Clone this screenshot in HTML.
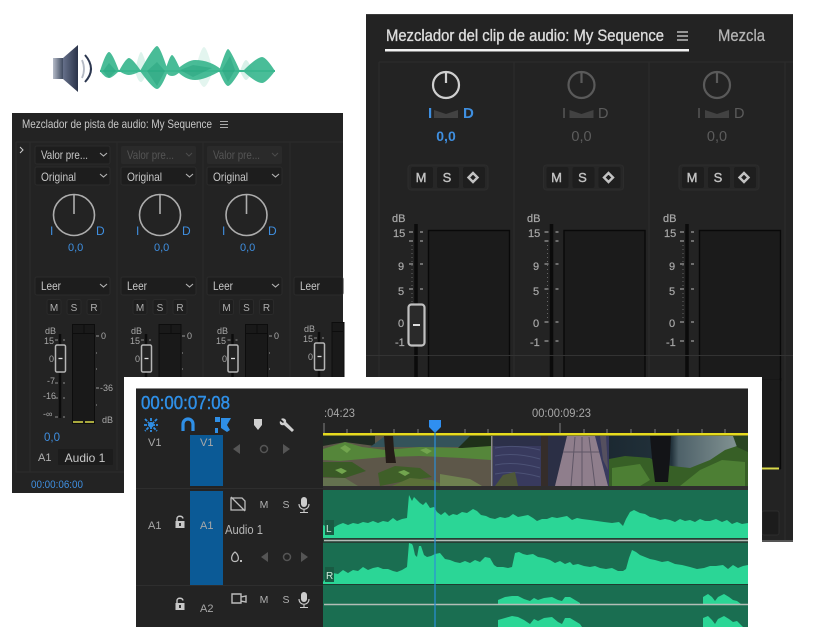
<!DOCTYPE html>
<html><head><meta charset="utf-8"><style>
html,body{margin:0;padding:0;background:#fff;width:821px;height:629px;overflow:hidden}
svg{display:block;filter:blur(.35px)}
text{font-family:"Liberation Sans",sans-serif}
</style></head><body>
<svg width="821" height="629" viewBox="0 0 821 629" xmlns="http://www.w3.org/2000/svg">
<defs>
<linearGradient id="cone" x1="0" x2="1" y1="0" y2="0"><stop offset="0" stop-color="#66708a"/><stop offset="1" stop-color="#2a3349"/></linearGradient>
<linearGradient id="box" x1="0" x2="1" y1="0" y2="0"><stop offset="0" stop-color="#b5bbc8"/><stop offset="1" stop-color="#3f4a60"/></linearGradient>
<linearGradient id="sky" x1="0" x2="1" y1="0" y2="0"><stop offset="0" stop-color="#1c2932"/><stop offset=".45" stop-color="#22323b"/><stop offset=".5" stop-color="#4e6169"/><stop offset=".9" stop-color="#7f9090"/><stop offset="1" stop-color="#6a7c78"/></linearGradient>
<clipPath id="vid"><rect x="323" y="436" width="425" height="50"/></clipPath>
<g id="dd"><rect x="0" y="0" width="75" height="18" rx="2" fill="#1d1d1d" stroke="#2b2b2b"/><path d="M65 7l3.500 3 3.500-3" fill="none" stroke="#b5b5b5" stroke-width="1.100"/></g>
<g id="knob1"><circle cx="0" cy="0" r="20.500" fill="none" stroke="#adadad" stroke-width="1.600"/><path d="M0-20V-1" stroke="#adadad" stroke-width="1.600"/></g>
<g id="fader1">
<path d="M60 334V418" stroke="#0c0c0c" stroke-width="2.500"/>
<path d="M55 340h3M63 340h2M55 383h3M63 383h2M55 398h3M63 398h2M55 417h3M63 417h2" stroke="#8c8c8c"/>
<rect x="55.500" y="345" width="10" height="27" rx="1.500" fill="#232323" stroke="#b5b5b5" stroke-width="1.500"/>
<path d="M58.500 358.500h4" stroke="#ddd" stroke-width="1.300"/>
</g>
<g id="msr"><rect x="47" y="299.500" width="14" height="15" rx="2" fill="#1e1e1e" stroke="#2a2a2a"/><rect x="67" y="299.500" width="14" height="15" rx="2" fill="#1e1e1e" stroke="#2a2a2a"/><rect x="87" y="299.500" width="14" height="15" rx="2" fill="#1e1e1e" stroke="#2a2a2a"/></g>
<g id="knob2"><circle cx="0" cy="0" r="13" fill="none" stroke-width="2.200"/><path d="M0-13V-2" fill="none" stroke-width="2.200"/></g>
<g id="ticks2">
<path d="M416 224V380" stroke="#0b0b0b" stroke-width="3.500"/>
<path d="M409 232h4M420 232h3M409 241h4M420 241h3M409 264h4M420 264h3M409 289h4M420 289h3M409 322h4M420 322h3M409 341h4M420 341h3" stroke="#9a9a9a" stroke-width="1.300"/>
<path d="M412 245V320" stroke="#666" stroke-width="1" stroke-dasharray="1 3"/>
<rect x="428.500" y="230.500" width="81" height="150" fill="#1b1b1b" stroke="#090909" stroke-width="1.400"/>
<rect x="408" y="165" width="80" height="25" rx="3" fill="#272727" stroke="#2c2c2c"/>
<rect x="411" y="167" width="22" height="21" rx="2" fill="#1e1e1e"/><rect x="437" y="167" width="22" height="21" rx="2" fill="#1e1e1e"/><rect x="463" y="167" width="22" height="21" rx="2" fill="#1e1e1e"/>
<path d="M434 110l12 4 12-4v8h-24z" fill="#424242"/>
</g>
<g id="mic"><rect x="-3" y="-8" width="6" height="10" rx="3" fill="#ccc"/><path d="M-5-1c0 7 10 7 10 0M0 4v3M-4 7.500h8" fill="none" stroke="#ccc" stroke-width="1.100"/></g>
<g id="lock"><path d="M-3-3v-2.500c0-3 5.500-3 6 0" fill="none" stroke="#c8c8c8" stroke-width="1.400"/><rect x="-4.500" y="-3" width="9" height="7" fill="#c8c8c8"/><rect x="-1" y="-1" width="2" height="3" fill="#333"/></g>
</defs>

<rect width="821" height="629" fill="#fff"/>

<!-- logo -->
<g>
<path d="M135 71Q139 52 141 52Q143 52 148 71Q143 82 141 82Q138 82 135 71Z" fill="#8fd8c0" opacity=".3"/>
<path d="M195 71Q201 47 204 47Q207 47 213 71Q207 87 204 87Q201 87 195 71Z" fill="#8fd8c0" opacity=".25"/>
<path d="M240 71Q244 60 246 60Q248 60 253 71Q248 80 246 80Q244 80 240 71Z" fill="#8fd8c0" opacity=".35"/>
<g fill="#3ab78f" opacity=".92">
<path d="M100 71Q106 52 109 52Q112 52 119 71Q112 78 109 78Q105 78 100 71Z"/>
<path d="M119 71Q126 58 129 58Q132 58 141 71Q133 75 129 75Q125 75 119 71Z"/>
<path d="M140 71Q154 46 157 46Q160 46 168 71Q161 89 157 89Q153 89 140 71Z"/>
<path d="M165 71Q170 55 172 55Q174 55 181 71Q176 76 172 76Q168 76 165 71Z"/>
<path d="M176 70Q188 60 195 60Q210 60 222 70Q205 80 195 80Q185 80 176 70Z"/>
<path d="M219 71Q226 49 228 49Q230 49 240 71Q231 86 228 86Q225 86 219 71Z"/>
<path d="M243 71Q257 57 262 57Q266 57 275 71Q266 83 262 83Q256 83 243 71Z"/>
</g>
<path d="M100 71H275" stroke="#3ab78f" stroke-width="2"/>
<g fill="#1f9e78" opacity=".4"><path d="M103 71L109 63 116 71 109 78Z"/><path d="M147 71L157 62 165 71 157 86Z"/><path d="M180 70L193 65 212 68 193 77Z"/><path d="M222 70L230 56 235 70 228 82Z"/></g>
<rect x="53" y="58" width="10" height="21" fill="url(#box)"/>
<path d="M63 58L78 45V92L63 79Z" fill="url(#cone)"/>
<path d="M82 60Q86 69 82 78" fill="none" stroke="#b5bac4" stroke-width="1.800"/>
<path d="M85 55Q97 69 85 82" fill="none" stroke="#2c3750" stroke-width="2"/>
</g>

<!-- panel 1 -->
<rect x="12" y="113" width="331" height="380" fill="#232323"/>
<text x="22" y="128" font-size="12" fill="#c8c8c8" textLength="190" lengthAdjust="spacingAndGlyphs">Mezclador de pista de audio: My Sequence</text>
<path d="M220 121.500h8M220 124.500h8M220 127.500h8" stroke="#aaa"/>
<path d="M16 142H343M16 142V472H30M30 142V472H343" fill="none" stroke="#2c2c2c"/>
<path d="M117 142V470M203 142V470M290 142V470" stroke="#2b2b2b"/>
<path d="M20 147l3 3-3 3" fill="none" stroke="#ccc"/>

<use href="#dd" x="35" y="146"/><use href="#dd" x="35" y="167"/><use href="#dd" x="35" y="277"/>
<rect x="121" y="146" width="75" height="18" rx="2" fill="#2a2a2a"/><rect x="207" y="146" width="75" height="18" rx="2" fill="#2a2a2a"/>
<path d="M186 153l3 3 3-3M272 153l3 3 3-3" fill="none" stroke="#4c4c4c"/>
<use href="#dd" x="121" y="167"/><use href="#dd" x="121" y="277"/>
<use href="#dd" x="207" y="167"/><use href="#dd" x="207" y="277"/>
<rect x="294" y="277" width="49" height="18" rx="2" fill="#1d1d1d" stroke="#2b2b2b"/>

<g font-size="12" fill="#c8c8c8">
<text x="41" y="159" textLength="47" lengthAdjust="spacingAndGlyphs">Valor pre...</text><text x="41" y="181" textLength="35" lengthAdjust="spacingAndGlyphs">Original</text><text x="41" y="290" textLength="20" lengthAdjust="spacingAndGlyphs">Leer</text>
<text x="127" y="159" fill="#555" textLength="47" lengthAdjust="spacingAndGlyphs">Valor pre...</text><text x="127" y="181" textLength="35" lengthAdjust="spacingAndGlyphs">Original</text><text x="127" y="290" textLength="20" lengthAdjust="spacingAndGlyphs">Leer</text>
<text x="213" y="159" fill="#555" textLength="47" lengthAdjust="spacingAndGlyphs">Valor pre...</text><text x="213" y="181" textLength="35" lengthAdjust="spacingAndGlyphs">Original</text><text x="213" y="290" textLength="20" lengthAdjust="spacingAndGlyphs">Leer</text>
<text x="300" y="290" textLength="20" lengthAdjust="spacingAndGlyphs">Leer</text>
</g>
<use href="#knob1" x="74" y="215"/><use href="#knob1" x="160" y="215"/><use href="#knob1" x="246.500" y="215"/>
<g font-size="12" fill="#3f8fe0">
<text x="50" y="235">I</text><text x="96" y="235">D</text><text x="68" y="251" font-size="11">0,0</text>
<text x="136" y="235">I</text><text x="182" y="235">D</text><text x="154" y="251" font-size="11">0,0</text>
<text x="222" y="235">I</text><text x="268" y="235">D</text><text x="240" y="251" font-size="11">0,0</text>
<text x="44" y="441" font-size="11.500">0,0</text>
</g>
<use href="#msr"/><use href="#msr" x="86"/><use href="#msr" x="172.500"/>
<g font-size="10" fill="#b0b0b0" text-anchor="middle">
<text x="54" y="311">M</text><text x="74" y="311">S</text><text x="94" y="311">R</text>
<text x="140" y="311">M</text><text x="160" y="311">S</text><text x="180" y="311">R</text>
<text x="226.500" y="311">M</text><text x="246.500" y="311">S</text><text x="266.500" y="311">R</text>
</g>
<use href="#fader1"/><use href="#fader1" x="86"/><use href="#fader1" x="172.500"/><use href="#fader1" x="259" y="-2"/>

<g fill="#191919" stroke="#0d0d0d">
<rect x="72.500" y="324.500" width="22" height="99"/><rect x="159" y="324.500" width="22" height="60"/><rect x="245.500" y="324.500" width="22" height="60"/><rect x="332" y="322.500" width="12" height="60"/>
</g>
<path d="M72 333.500h23M84 325v8M159 333.500h22M171 325v8M245 333.500h23M257 325v8M332 331.500h11" stroke="#0d0d0d" fill="none"/>
<path d="M73 422h10M85 422h9" stroke="#d9d94a" stroke-width="1.600"/>
<path d="M96 336h3M182 336h3M269 336h3M96 388h3M96 353h1M96 369h1M96 405h1M182 353h1M182 369h1M269 353h1M269 369h1" stroke="#999"/>
<g font-size="9" fill="#a8a8a8">
<text x="45" y="334">dB</text><text x="44" y="344">15</text><text x="49" y="362">0</text><text x="47" y="384">-7</text><text x="43" y="399">-16</text><text x="43" y="417">-∞</text>
<text x="131" y="334">dB</text><text x="130" y="344">15</text><text x="135" y="362">0</text>
<text x="217" y="334">dB</text><text x="216" y="344">15</text><text x="222" y="362">0</text>
<text x="304" y="332">dB</text><text x="303" y="342">15</text><text x="308" y="360">0</text>
<text x="101" y="339">0</text><text x="187" y="339">0</text><text x="274" y="339">0</text>
<text x="100" y="391">-36</text><text x="102" y="423">dB</text>
</g>
<rect x="58" y="449" width="55" height="16" rx="1" fill="#1c1c1c"/>
<text x="38" y="461" font-size="11" fill="#b0b0b0">A1</text>
<text x="85" y="462" font-size="12" fill="#c8c8c8" text-anchor="middle">Audio 1</text>
<text x="31" y="488" font-size="11" fill="#3f8fe0" textLength="52" lengthAdjust="spacingAndGlyphs">00:00:06:00</text>

<!-- panel 2 -->
<rect x="366" y="14" width="427" height="527" fill="#232323"/>
<rect x="366" y="14" width="427" height="1" fill="#3a3a3a"/>
<text x="386" y="41" font-size="17" fill="#dcdcdc" stroke="#dcdcdc" stroke-width=".35" textLength="278" lengthAdjust="spacingAndGlyphs">Mezclador del clip de audio: My Sequence</text>
<path d="M677 32h11M677 36h11M677 40h11" stroke="#bbb" stroke-width="1.400"/>
<rect x="385" y="49" width="304" height="2.500" fill="#f2f2f2"/>
<text x="718" y="41" font-size="17" fill="#b5b5b5" stroke="#b5b5b5" stroke-width=".25" textLength="47" lengthAdjust="spacingAndGlyphs">Mezcla</text>
<path d="M379 62H793M379 62V380M514 62V380M649 62V380M785 62V541" stroke="#2d2d2d" fill="none"/>
<use href="#ticks2"/><use href="#ticks2" x="135.500"/><use href="#ticks2" x="271"/>
<use href="#knob2" x="446" y="85" stroke="#cfcfcf"/><use href="#knob2" x="581.500" y="85" stroke="#5a5a5a"/><use href="#knob2" x="717" y="85" stroke="#5a5a5a"/>
<text x="428" y="118" font-size="15" font-weight="bold" fill="#3f8fe0">I</text><text x="463" y="118" font-size="15" font-weight="bold" fill="#3f8fe0">D</text>
<text x="446" y="141" font-size="14" font-weight="bold" fill="#3f8fe0" text-anchor="middle">0,0</text>
<g font-size="14.500" fill="#5c5c5c">
<text x="562" y="118">I</text><text x="598" y="118">D</text><text x="581.500" y="141" text-anchor="middle">0,0</text>
<text x="697" y="118">I</text><text x="734" y="118">D</text><text x="717" y="141" text-anchor="middle">0,0</text>
</g>
<g font-size="13" fill="#c2c2c2" stroke="#c2c2c2" stroke-width=".4" text-anchor="middle">
<text x="421" y="182">M</text><text x="447" y="182">S</text>
<text x="556.500" y="182">M</text><text x="582.500" y="182">S</text>
<text x="692" y="182">M</text><text x="718" y="182">S</text>
</g>
<path d="M473 173l4.500 4.500-4.500 4.500-4.500-4.500zM608.500 173l4.500 4.500-4.500 4.500-4.500-4.500zM744 173l4.500 4.500-4.500 4.500-4.500-4.500z" fill="none" stroke="#c2c2c2" stroke-width="2.400"/>
<g font-size="11" fill="#a8a8a8" stroke="#a8a8a8" stroke-width=".2">
<text x="392" y="222">dB</text><text x="393" y="237">15</text><text x="398" y="270">9</text><text x="398" y="295">5</text><text x="398" y="327">0</text><text x="395" y="346">-1</text>
<text x="527" y="222">dB</text><text x="528" y="237">15</text><text x="533" y="270">9</text><text x="533" y="295">5</text><text x="533" y="327">0</text><text x="530" y="346">-1</text>
<text x="663" y="222">dB</text><text x="664" y="237">15</text><text x="669" y="270">9</text><text x="669" y="295">5</text><text x="669" y="327">0</text><text x="666" y="346">-1</text>
</g>
<rect x="408.500" y="304.500" width="16" height="41" rx="3" fill="#2a2a2a" stroke="#c0c0c0" stroke-width="2.200"/>
<path d="M413 325h7" stroke="#ddd" stroke-width="2"/>
<path d="M366 355.500H793" stroke="#333"/>
<!-- lower-right part of panel 2 -->
<rect x="762" y="380" width="19" height="90" fill="#1b1b1b"/>
<path d="M780.500 378V469" stroke="#090909" stroke-width="1.400"/>
<path d="M762 468.500H779" stroke="#d9d94a" stroke-width="2"/>
<rect x="762" y="511" width="17" height="24" rx="2" fill="#1c1c1c" stroke="#2d2d2d"/>
<rect x="762" y="540" width="31" height="2" fill="#555"/>

<!-- timeline -->
<rect x="124" y="377" width="638" height="252" fill="#fff"/>
<rect x="136" y="388" width="612" height="239" fill="#232323"/>
<rect x="136" y="388" width="612" height="1" fill="#8a8a8a"/>
<text x="141" y="409" font-size="18.500" fill="#2f8fe6" stroke="#2f8fe6" stroke-width=".45" textLength="89" lengthAdjust="spacingAndGlyphs">00:00:07:08</text>

<!-- tool icons -->
<path d="M145 419l12 12M157 419l-12 12M151 418v14M144 425h14" stroke="#2f8fe6" stroke-width="1.800" stroke-dasharray="3 1"/>
<path d="M183 431v-7a5 5 0 0 1 10 0v7" fill="none" stroke="#2f8fe6" stroke-width="3.200"/>
<path d="M215 417h5v5h-5zM215 428h3v5h-3z" fill="#2f8fe6"/><path d="M221 418l10 0-4 7 3 5-3 2-6-4z" fill="#2f8fe6"/>
<path d="M254 419h8v6l-4 5-4-5z" fill="#cfcfcf"/>
<path d="M281 419c3-2 6 1 5 3l8 8-2 2-8-7c-3 1-5-1-4-4l3 2 1-1z" fill="#cfcfcf"/>

<!-- ruler -->
<text x="324" y="417" font-size="12" fill="#a6a6a6" textLength="31" lengthAdjust="spacingAndGlyphs">:04:23</text>
<text x="532" y="417" font-size="12" fill="#a6a6a6" textLength="59" lengthAdjust="spacingAndGlyphs">00:00:09:23</text>
<path d="M324 423v10M347 429v4M371 429v4M394 429v4M418 429v4M465 429v4M465 429v4M488 429v4M512 429v4M560 423v10M584 429v4M607 429v4M631 429v4M655 429v4M678 429v4M702 429v4M725 429v4" stroke="#808080"/>

<!-- track headers -->
<rect x="190" y="435" width="33" height="51" fill="#0b5a96"/>
<rect x="190" y="491" width="33" height="94" fill="#0b5a96"/>
<path d="M136 488.500H323M136 585.500H323" stroke="#2e2e2e"/>
<g font-size="11" fill="#a8a8a8">
<text x="148" y="446">V1</text><text x="200" y="446">V1</text>
<text x="148" y="529">A1</text><text x="200" y="529">A1</text><text x="200" y="612">A2</text>
</g>
<text x="225" y="534" font-size="12.500" fill="#b5b5b5" textLength="38" lengthAdjust="spacingAndGlyphs">Audio 1</text>
<g fill="#555"><path d="M240 444v10l-7-5zM283 444v10l7-5z"/><circle cx="264" cy="449" r="3.500" fill="none" stroke="#555" stroke-width="1.500"/>
<path d="M268 552v10l-7-5zM301 552v10l7-5z"/><circle cx="287" cy="557" r="3.500" fill="none" stroke="#555" stroke-width="1.500"/></g>
<use href="#lock" x="180" y="524"/><use href="#lock" x="180" y="606"/>
<path d="M231 498h11l3 3v9h-14zM231 497l14 14" fill="none" stroke="#bdbdbd" stroke-width="1.300"/>
<path d="M232 594h9v9h-9zM241 597l5-1v6l-5-1z" fill="none" stroke="#bdbdbd" stroke-width="1.400"/>
<path d="M235 552c3 2 4 6 3 8s-5 2-6 0 0-6 3-8z" fill="none" stroke="#bdbdbd" stroke-width="1.200"/><rect x="240" y="560" width="2" height="2" fill="#bdbdbd"/>
<g font-size="10.500" fill="#b0b0b0" text-anchor="middle">
<text x="264" y="508">M</text><text x="286" y="508">S</text>
<text x="264" y="603">M</text><text x="286" y="603">S</text>
</g>
<use href="#mic" x="304" y="505"/><use href="#mic" x="304" y="600"/>

<!-- video -->
<rect x="323" y="435" width="425" height="55" fill="#2e2e2e"/>
<g clip-path="url(#vid)">
<!-- clip 1 -->
<rect x="323" y="436" width="168" height="50" fill="#5d5749"/>
<path d="M323 436H375V446L345 442 323 446Z" fill="#1f2a22"/>
<path d="M370 447L385 436H470L462 447Z" fill="#34535a"/>
<path d="M458 448L470 436H491V450Z" fill="#1f3019"/>
<path d="M323 449L345 442 362 447 385 450 420 447 462 448 491 446V460L462 458 420 456 385 457 362 459 340 461 323 460Z" fill="#55863a"/>
<path d="M323 462H352L366 471 345 478 323 477Z" fill="#3a5a26"/>
<path d="M323 478L345 478 358 486H323Z" fill="#64724f"/>
<path d="M378 473L395 466 420 468 432 477 400 482 380 486Z" fill="#3f5f28"/>
<path d="M392 486L410 478 432 480 446 486Z" fill="#5b7038"/>
<path d="M440 474L470 479 482 486H440Z" fill="#6f8150"/>
<path d="M384 436H393L394 450 396 463H386Z" fill="#241c18"/>
<path d="M340 448l5-3 6 4-4 4zM420 450l6-2 6 3-5 3zM335 470l6-2 6 3-5 3zM398 472l6-2 6 3-5 3z" fill="#72a54e"/>
<rect x="491" y="436" width="1.500" height="50" fill="#8a8a8e"/>
<!-- clip 2 -->
<rect x="493" y="436" width="116" height="50" fill="#383a5e"/>
<path d="M493 436H541V446H493Z" fill="#2c3049"/>
<path d="M548 436H567V486H548Z" fill="#2b2f45"/>
<g stroke="#565c80" fill="none" opacity=".7"><path d="M495 448q20-4 45 2M495 456q20-4 45 3M495 465q20-4 45 3M495 474q20-4 45 3"/></g>
<path d="M495 486L503 475 515 472 518 486Z" fill="#4e5838"/>
<path d="M541 436H548V486H541Z" fill="#352d2a"/>
<path d="M567 436H595L608 486H555Z" fill="#8f7e8c"/>
<path d="M575 437L571 486M582 437V486M589 437L595 486M563 452H599" stroke="#5f5666" fill="none"/>
<path d="M600 436H606L608 470 603 460Z" fill="#55505f"/>
<!-- clip 3 -->
<rect x="609" y="436" width="139" height="50" fill="url(#sky)"/>
<path d="M609 459L625 456 650 458 660 464 672 466 690 468 710 460 725 450 737 446 748 448V486H609Z" fill="#375f26"/>
<path d="M612 468L640 464 650 480 640 486H612ZM680 486L700 470 722 460 745 462V486Z" fill="#4d7f34"/>
<path d="M650 436H671L670 458 668 482H655L652 458Z" fill="#131417"/>
<path d="M733 436H748V452L737 447Z" fill="#2a4522"/>
</g>
<rect x="323" y="486" width="425" height="4" fill="#2e2e2e"/>

<!-- audio tracks -->
<rect x="323" y="490" width="425" height="137" fill="#1a6e51"/>
<path d="M323 525L328 527 333 528 338 525 343 523 348 525 353 523 358 524 363 522 368 523 373 521 378 523 383 521 388 522 393 518 397 521 402 519 407 518 409 495 412 501 414 497 417 500 420 503 423 505 426 502 430 508 434 507 437 512 441 515 445 512 449 516 453 514 457 515 462 512 467 513 473 509 477 511 481 515 486 516 490 518 495 519 500 517 505 518 509 517 513 514 518 517 523 516 528 515 533 518 537 521 542 519 547 519 552 517 557 518 562 517 567 516 572 520 577 518 582 519 590 520 597 521 604 522 612 523 619 522 623 526 626 519 630 512 634 510 640 513 645 514 650 517 655 518 660 520 665 519 670 520 675 522 680 519 685 521 690 520 695 522 700 519 705 521 710 521 716 519 722 522 727 520 732 524 737 522 742 524 748 523V538H323Z" fill="#2bd696"/>
<path d="M323 582L328 576 333 573 338 574 343 570 348 573 353 570 358 571 363 567 368 570 373 568 378 567 383 569 388 569 393 571 397 572 402 570 407 567 409 543 412 544 413 546 415 555 417 557 419 546 421 546 424 555 427 557 431 556 435 554 440 553 445 559 450 560 455 562 460 563 465 561 470 563 475 560 480 562 485 557 490 558 494 565 497 567 503 567 508 568 512 567 515 553 519 552 523 554 527 555 533 554 538 557 544 558 550 560 555 563 560 561 565 564 570 562 573 565 578 564 584 566 590 567 595 566 600 568 606 569 612 568 618 571 623 571 626 569 629 558 632 550 636 552 640 555 645 557 650 559 655 560 662 562 668 561 675 564 682 565 690 567 697 569 704 568 710 566 716 566 723 565 728 569 733 565 738 568 743 566 748 565V584H323Z" fill="#2bd696"/>
<path d="M498 604V600L505 597 512 596 518 596 524 599 530 601 534 598 538 600 544 598 552 597 558 600 562 601 565 597 570 597 575 600 580 603V604ZM703 604V597L708 594 712 597 715 601 718 597 724 594 729 597 733 600 737 601 741 604Z" fill="#2bd696"/>
<path d="M498 627V620L505 618 512 616 518 617 524 620 530 624 534 619 538 621 544 618 552 617 558 622 562 624 565 618 570 618 575 621 580 624 582 627ZM703 627V618L708 616 712 620 715 624 718 619 724 616 729 619 733 622 737 621 741 625 743 627Z" fill="#2bd696"/>
<rect x="323" y="538" width="425" height="5" fill="#253f34"/>
<path d="M324 540.500H748M324 604.500H748" stroke="#b3bdb7" stroke-width="1.500"/>
<path d="M323 584.500H748" stroke="#1f3c30"/>
<rect x="325" y="520" width="9" height="15" fill="#195b43"/><text x="326" y="532" font-size="10" fill="#cfe9dc">L</text>
<rect x="325" y="567" width="9" height="15" fill="#195b43"/><text x="326" y="579" font-size="10" fill="#cfe9dc">R</text>

<!-- yellow line + playhead -->
<rect x="323" y="433" width="425" height="2.500" fill="#e6dc1e"/>
<path d="M429 420h12v7l-5 5h-2l-5-5z" fill="#2f8ff0"/>
<path d="M435 430V627" stroke="#2a8fd8" stroke-width="1.200"/>
</svg>
</body></html>
